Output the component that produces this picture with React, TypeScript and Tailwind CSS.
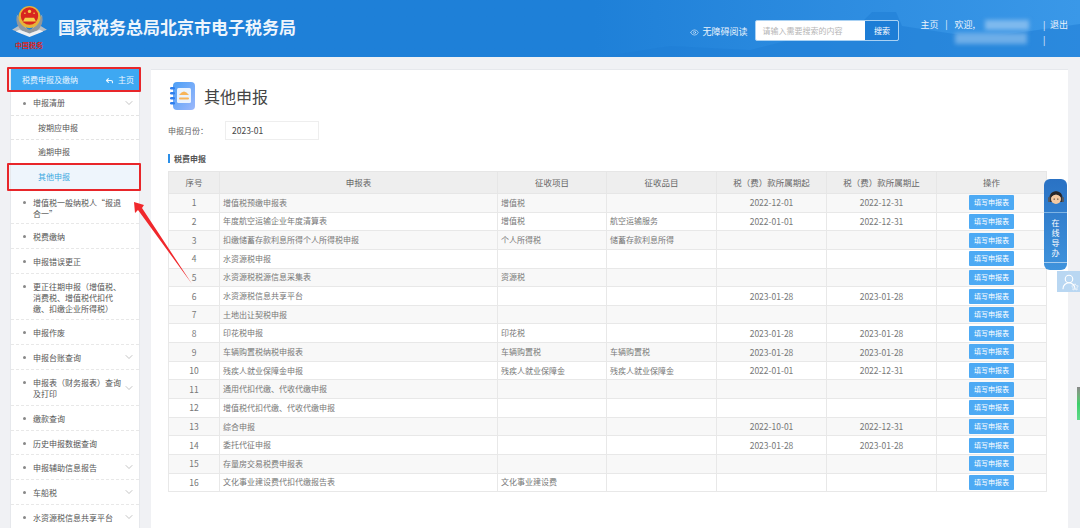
import { ChevronDown, Eye, Reply, UserRound, Star } from "lucide-react";

const FONT = "font-['Noto_Sans_CJK_SC','Noto_Sans',sans-serif]";

const NAV_ITEMS = [
  { label: "增值税一般纳税人“报退合一”", height: "h-[34px]" },
  { label: "税费缴纳", height: "h-[25px]" },
  { label: "申报错误更正", height: "h-[25px]" },
  { label: "更正往期申报（增值税、消费税、增值税代扣代缴、扣缴企业所得税）", height: "h-[46px]" },
  { label: "申报作废", height: "h-[25px]" },
  { label: "申报台账查询", height: "h-[25px]", arrow: true },
  { label: "申报表（财务报表）查询及打印", height: "h-[36px]", arrow: true },
  { label: "缴款查询", height: "h-[25px]" },
  { label: "历史申报数据查询", height: "h-[24px]" },
  { label: "申报辅助信息报告", height: "h-[25px]", arrow: true },
  { label: "车船税", height: "h-[25px]", arrow: true },
  { label: "水资源税信息共享平台", height: "h-[25px]", arrow: true },
];

const ROWS = [
  ["增值税预缴申报表", "增值税", "", "2022-12-01", "2022-12-31"],
  ["年度航空运输企业年度清算表", "增值税", "航空运输服务", "2022-01-01", "2022-12-31"],
  ["扣缴储蓄存款利息所得个人所得税申报", "个人所得税", "储蓄存款利息所得", "", ""],
  ["水资源税申报", "", "", "", ""],
  ["水资源税税源信息采集表", "资源税", "", "", ""],
  ["水资源税信息共享平台", "", "", "2023-01-28", "2023-01-28"],
  ["土地出让契税申报", "", "", "", ""],
  ["印花税申报", "印花税", "", "2023-01-28", "2023-01-28"],
  ["车辆购置税纳税申报表", "车辆购置税", "车辆购置税", "2023-01-28", "2023-01-28"],
  ["残疾人就业保障金申报", "残疾人就业保障金", "残疾人就业保障金", "2022-01-01", "2022-12-31"],
  ["通用代扣代缴、代收代缴申报", "", "", "", ""],
  ["增值税代扣代缴、代收代缴申报", "", "", "", ""],
  ["综合申报", "", "", "2022-10-01", "2022-12-31"],
  ["委托代征申报", "", "", "2023-01-28", "2023-01-28"],
  ["存量房交易税费申报表", "", "", "", ""],
  ["文化事业建设费代扣代缴报告表", "文化事业建设费", "", "", ""],
];

const HEADERS = ["序号", "申报表", "征收项目", "征收品目", "税（费）款所属期起", "税（费）款所属期止", "操作"];

function Emblem() {
  return (
    <svg viewBox="0 0 40 36" className="h-[33px] w-[37px]">
      <path d="M1 27 L9 22 L6 10 L20 30 L34 10 L31 22 L39 27 L28 31 L12 31 Z" fill="#b9bec4" />
      <path d="M6 12 Q4 22 12 28 L20 31 L28 28 Q36 22 34 12 L30 14 Q30 24 20 27 Q10 24 10 14 Z" fill="#8f979e" />
      <circle cx="20" cy="13" r="12" fill="#e8b33a" />
      <circle cx="20" cy="12" r="9.5" fill="#d8261f" />
      <circle cx="20" cy="7" r="1.8" fill="#f5cf4a" />
      <circle cx="15" cy="9" r="0.9" fill="#f5cf4a" />
      <circle cx="25" cy="9" r="0.9" fill="#f5cf4a" />
      <path d="M13 18 H27 L25 14 H15 Z" fill="#f5cf4a" />
      <path d="M5 29 L20 35 L35 29 L31 27 L20 31 L9 27 Z" fill="#eef0f2" />
    </svg>
  );
}

function PageIcon() {
  return (
    <svg viewBox="0 0 25 28" className="h-[28px] w-[25px]">
      <defs>
        <linearGradient id="pageFill" x1="0" y1="0" x2="1" y2="1">
          <stop offset="0" stopColor="#4b9ff6" />
          <stop offset="1" stopColor="#9db8fb" />
        </linearGradient>
      </defs>
      <rect x="3" y="0" width="22" height="28" rx="4" fill="url(#pageFill)" />
      <rect x="7" y="6" width="14" height="15" rx="1.5" fill="#eaf3fe" />
      <path d="M9 13 Q14 6 19 13 Z" fill="#f7b45a" />
      <rect x="9" y="15.5" width="10" height="2" rx="1" fill="#f7b45a" />
      <rect x="0" y="5" width="5" height="2.4" rx="1.2" fill="#2f7fee" />
      <rect x="0" y="10" width="5" height="2.4" rx="1.2" fill="#2f7fee" />
      <rect x="0" y="15" width="5" height="2.4" rx="1.2" fill="#2f7fee" />
      <rect x="0" y="20" width="5" height="2.4" rx="1.2" fill="#2f7fee" />
    </svg>
  );
}

function Agent() {
  return (
    <svg viewBox="0 0 24 24" className="h-[20px] w-[20px]">
      <path d="M4 13 a8 8 0 0 1 16 0 v5 h-16 Z" fill="#2f2f33" />
      <ellipse cx="12" cy="14.5" rx="6" ry="6" fill="#f4c9a2" />
      <path d="M6 12 Q12 6 18 12 L18 8 Q12 3 6 8 Z" fill="#26262a" />
      <circle cx="9.8" cy="14.5" r="0.8" fill="#222" />
      <circle cx="14.2" cy="14.5" r="0.8" fill="#222" />
      <rect x="2.5" y="12" width="2.5" height="6" rx="1" fill="#55585e" />
      <rect x="19" y="12" width="2.5" height="6" rx="1" fill="#55585e" />
    </svg>
  );
}

function Header() {
  return (
    <header className="relative flex h-[57px] items-start bg-gradient-to-r from-[#1e80d8] from-55% to-[#3a98e8] pl-[10px] text-white">
      <svg viewBox="0 0 480 57" className="absolute right-0 top-0 h-[57px] w-[480px]" preserveAspectRatio="none">
        <path d="M0 57 L70 46 L150 50 L230 30 L262 22 L272 12 L296 12 L302 26 L380 38 L480 24 V57 Z" fill="#1f7ed6" opacity="0.55" />
      </svg>
      <div className="relative flex w-[38px] flex-col items-center pt-[5px]">
        <Emblem />
        <span className="mt-[3px] whitespace-nowrap text-[7px] leading-[9px] font-bold text-[#d8261f]">中国税务</span>
      </div>
      <h1 className="relative ml-[10px] mt-[14px] whitespace-nowrap text-[17px] font-bold leading-[26px] text-[#eef5fc]">国家税务总局北京市电子税务局</h1>
      <div className="relative ml-auto flex items-start whitespace-nowrap pr-[12px] text-[9px] text-[#eaf3fc]">
        <div className="mt-[25px] flex items-center gap-[2px] leading-[14px]">
          <Eye className="h-[9px] w-[11px]" strokeWidth={1.5} />
          <span>无障碍阅读</span>
        </div>
        <div className="ml-[8px] mt-[20px] flex h-[21px] w-[144px] overflow-hidden rounded-[2px] border border-[#a9d1f3] bg-white">
          <span className="flex-1 pl-[6px] text-[8px] leading-[19px] text-[#b5b5b5]">请输入需要搜索的内容</span>
          <span className="w-[33px] bg-[#1d7dd6] text-center text-[8px] leading-[19px] text-white">搜索</span>
        </div>
        <div className="ml-[21px] mt-[18px] flex leading-[14px]">
          <span>主页</span>
          <span className="w-[16px] text-center">|</span>
          <span>欢迎,</span>
          <div className="relative w-[68px]">
            <div className="absolute left-[10px] top-[2px] h-[10px] w-[44px] bg-[#7fb9ee] blur-[2px]" />
            <div className="absolute left-[-20px] top-[15px] h-[11px] w-[72px] bg-[#6eaee8] blur-[2px]" />
          </div>
          <span className="w-[7px] leading-[15px]">|<br />|</span>
          <span>退出</span>
        </div>
      </div>
    </header>
  );
}

function Sidebar() {
  return (
    <aside className="ml-[10px] w-[130px] shrink-0 border-x border-[#e6e8ec] bg-white text-[8px] text-[#555]">
      <div className="flex h-[22px] items-center justify-between bg-[#3ea8f2] pl-[11px] pr-[5px] text-[#eaf6fe]">
        <span>税费申报及缴纳</span>
        <span className="flex items-center gap-[4px]">
          <Reply className="h-[9px] w-[9px]" strokeWidth={3} />
          主页
        </span>
      </div>
      <div className="flex h-[25px] items-center border-b border-dashed border-[#e4e4e4] pl-[12px] pr-[4px]">
        <span className="mr-[7px] h-[3px] w-[3px] rounded-full bg-[#888]" />
        <span className="flex-1">申报清册</span>
        <ChevronDown className="h-[12px] w-[12px] text-[#888]" strokeWidth={1} />
      </div>
      <div className="flex h-[24px] items-center border-b border-dashed border-[#e4e4e4] pl-[27px]">按期应申报</div>
      <div className="flex h-[24px] items-center pl-[27px]">逾期申报</div>
      <div className="flex h-[26px] items-center bg-[#eef5fc] pl-[27px] text-[#3aa8e0]">其他申报</div>
      {NAV_ITEMS.map((item) => (
        <div
          key={item.label}
          className={`flex ${item.height} items-start border-b border-dashed border-[#e8e8e8] pl-[12px] pr-[4px] pt-[7px] leading-[11px]`}
        >
          <span className="mr-[7px] mt-[4px] h-[3px] w-[3px] shrink-0 rounded-full bg-[#888]" />
          <span className="w-[89px]">{item.label}</span>
          {item.arrow && <ChevronDown className="ml-auto mt-[-7px] h-[12px] w-[12px] shrink-0 self-center text-[#888]" strokeWidth={1} />}
        </div>
      ))}
    </aside>
  );
}

function FormTable() {
  return (
    <table className="w-[878px] table-fixed border-collapse text-[8px] text-[#777]">
      <colgroup>
        <col className="w-[51px]" />
        <col className="w-[278px]" />
        <col className="w-[109px]" />
        <col className="w-[110px]" />
        <col className="w-[110px]" />
        <col className="w-[110px]" />
        <col className="w-[110px]" />
      </colgroup>
      <thead>
        <tr className="h-[22px] bg-[#eeeeee] text-[8.5px] text-[#666]">
          {HEADERS.map((title) => (
            <th key={title} className="border border-[#e6e6e6] p-0 font-normal">{title}</th>
          ))}
        </tr>
      </thead>
      <tbody>
        {ROWS.map((row, i) => (
          <tr key={i} className={`h-[18.65px] ${i % 2 === 0 ? "bg-[#f8f8f8]" : "bg-white"}`}>
            <td className="border border-[#e8e8e8] p-0 text-center text-[8.5px]">{i + 1}</td>
            <td className="border border-[#e8e8e8] px-[3px] py-0">{row[0]}</td>
            <td className="border border-[#e8e8e8] px-[3px] py-0">{row[1]}</td>
            <td className="border border-[#e8e8e8] px-[3px] py-0">{row[2]}</td>
            <td className="border border-[#e8e8e8] p-0 text-center text-[8.5px]">{row[3]}</td>
            <td className="border border-[#e8e8e8] p-0 text-center text-[8.5px]">{row[4]}</td>
            <td className="border border-[#e8e8e8] p-0 text-center">
              <span className="inline-block h-[15px] w-[45px] rounded-[1px] bg-[#4daaf4] align-middle text-[7px] leading-[15px] text-white">填写申报表</span>
            </td>
          </tr>
        ))}
      </tbody>
    </table>
  );
}

export default function App() {
  return (
    <div className={`relative h-[528px] w-[1080px] overflow-hidden bg-[#f0f1f4] ${FONT}`}>
      <Header />
      <div className="mt-[12px] flex h-[459px] items-start gap-[11px]">
        <Sidebar />
        <main className="h-full w-[917px] border-t border-[#e6e8ec] bg-white pl-[17px]">
          <div className="ml-[2px] mt-[12px] flex items-center gap-[9px]">
            <PageIcon />
            <h2 className="text-[16px] leading-[28px] text-[#444]">其他申报</h2>
          </div>
          <div className="mt-[11px] flex items-center text-[8px] text-[#666]">
            <span className="w-[57px]">申报月份：</span>
            <span className="h-[19px] w-[94px] border border-[#eeeeee] pl-[6px] text-[8.5px] leading-[17px] text-[#444]">2023-01</span>
          </div>
          <div className="mb-[8px] mt-[14px] border-l-2 border-[#2b8fe8] pl-[4px] text-[8px] font-bold leading-[9px] text-[#555]">税费申报</div>
          <FormTable />
        </main>
      </div>

      {/* Annotations */}
      <div className="absolute left-[7px] top-[67px] h-[25px] w-[134px] rounded-[1px] border-2 border-[#e8262a]" />
      <div className="absolute left-[7px] top-[163px] h-[28px] w-[134px] rounded-[1px] border-2 border-[#e8262a]" />
      <svg viewBox="0 0 1080 528" className="absolute left-0 top-0 h-[528px] w-[1080px]">
        <path d="M192 284 L142 208 L144 205 L134 202 L135 213 L138 210 Z" fill="#f0282c" />
      </svg>

      {/* Floating helpers */}
      <div className="absolute left-[1044px] top-[179px] flex h-[91px] w-[23px] flex-col items-center rounded-[6px] bg-gradient-to-b from-[#2a72c4] to-[#3f93dc] text-[8px] leading-[10px] text-white">
        <div className="mt-[9px] flex h-[17px] items-center"><Agent /></div>
        <div className="mt-[7px] w-full border-t border-[#7fb4e4] pt-[5px] text-center">
          <p>在</p>
          <p>线</p>
          <p>导</p>
          <p>办</p>
        </div>
        <div className="mt-[4px] w-full border-t border-[#a5cbee]" />
      </div>
      <div className="absolute left-[1057px] top-[271px] flex h-[21px] w-[23px] items-center justify-center bg-[#b9d7f2] text-white">
        <UserRound className="h-[18px] w-[18px]" strokeWidth={1.5} />
        <Star className="absolute bottom-[1px] right-[1px] h-[8px] w-[8px]" strokeWidth={2} />
      </div>
      <div className="absolute left-[1077px] top-[387px] h-[33px] w-[3px] bg-gradient-to-b from-[#888] via-[#3ccf6a] to-[#5fd98a]" />
    </div>
  );
}
